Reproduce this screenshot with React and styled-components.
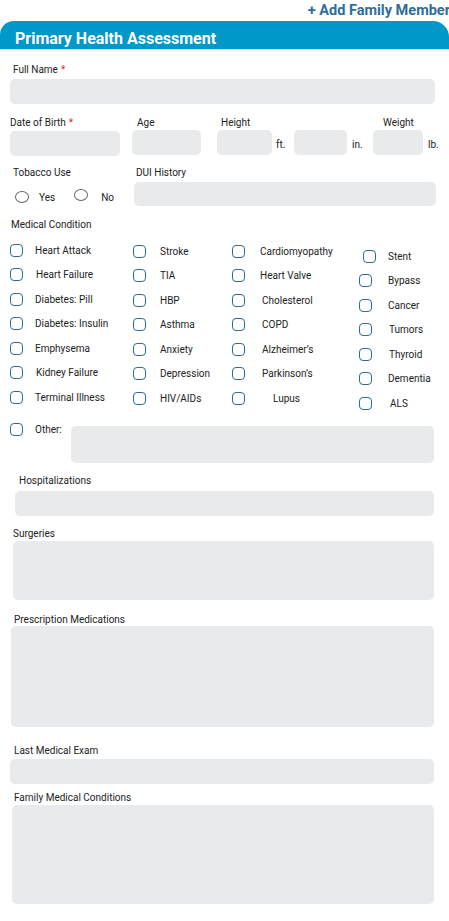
import React from 'react';
import styled, { createGlobalStyle } from 'styled-components';

const GlobalStyle = createGlobalStyle`
  body {
    margin: 0;
    background: #ffffff;
    font-family: Roboto, "Liberation Sans", Arial, sans-serif;
    color: #222222;
  }
`;

const Page = styled.div`
  width: 449px;
  height: 921px;
  overflow: hidden;
  background: #ffffff;
`;

const TopBar = styled.div`
  display: flex;
  justify-content: flex-end;
  height: 21px;
  align-items: center;
`;

const AddLink = styled.a`
  font-size: 14.5px;
  font-weight: 700;
  color: #2f6e98;
  text-decoration: none;
  white-space: nowrap;
  margin-right: -1px;
`;

const TitleBar = styled.div`
  height: 29px;
  background: #0097c9;
  border-radius: 14px 16px 0 0;
  border-bottom: 1px solid #bfe3f1;
  display: flex;
  align-items: center;
  padding: 6px 0 0 15px;
  box-sizing: border-box;
`;

const Title = styled.h1`
  margin: 0;
  font-size: 16px;
  font-weight: 700;
  color: #ffffff;
`;

const Field = styled.div`
  margin: ${(p) => p.$mt}px ${(p) => p.$mr ?? 15}px 0 ${(p) => p.$ml ?? 10}px;
  display: flex;
  flex-direction: column;
  gap: ${(p) => p.$gap ?? 3}px;
`;

const Label = styled.div`
  font-size: 10px;
  line-height: 12px;
  padding-left: ${(p) => p.$indent ?? 0}px;
  color: #222222;
  white-space: nowrap;
`;

const Required = styled.span`
  color: #e8262b;
  margin-left: 3px;
`;

const Box = styled.div`
  height: ${(p) => p.$h}px;
  width: ${(p) => (p.$w ? `${p.$w}px` : 'auto')};
  background: #e9eaec;
  border-radius: 5px;
  flex: ${(p) => (p.$w ? '0 0 auto' : '1 1 auto')};
`;

const Row = styled.div`
  display: flex;
  margin-top: ${(p) => p.$mt}px;
  padding-left: ${(p) => p.$pl ?? 0}px;
`;

const Group = styled.div`
  display: flex;
  flex-direction: column;
  gap: ${(p) => p.$gap ?? 1}px;
  margin-left: ${(p) => p.$ml ?? 0}px;
  margin-right: ${(p) => p.$mr ?? 0}px;
  width: ${(p) => (p.$w ? `${p.$w}px` : 'auto')};
  flex: ${(p) => (p.$grow ? '1 1 auto' : '0 0 auto')};
`;

const Inline = styled.div`
  display: flex;
  align-items: center;
`;

const Unit = styled.span`
  font-size: 10px;
  margin: 3px 0 0 ${(p) => p.$ml ?? 4}px;
  width: ${(p) => p.$w}px;
`;

const RadioRow = styled.div`
  display: flex;
  align-items: center;
  height: 18px;
  margin-top: 9px;
  padding-left: 2px;
`;

const Radio = styled.span`
  width: 12px;
  height: 10px;
  border: 1px solid #666666;
  border-radius: 50%;
  margin-bottom: ${(p) => p.$lift ?? 0}px;
  flex: 0 0 auto;
`;

const RadioText = styled.span`
  font-size: 10px;
  margin-left: ${(p) => p.$ml}px;
  margin-right: ${(p) => p.$mr ?? 0}px;
`;

const ConditionGrid = styled.div`
  display: grid;
  grid-template-columns: 123px 99px 127px 1fr;
  padding-left: 10px;
  margin-top: 7px;
`;

const Column = styled.div`
  display: flex;
  flex-direction: column;
  padding-top: ${(p) => p.$top}px;
`;

const Check = styled.label`
  display: flex;
  align-items: center;
  height: 24.5px;
  padding-left: ${(p) => p.$indent ?? 0}px;
`;

const Box13 = styled.span`
  width: 13px;
  height: 13px;
  box-sizing: border-box;
  border: 1.5px solid #2e6c95;
  border-radius: 4px;
  flex: 0 0 auto;
`;

const CheckText = styled.span`
  font-size: 10px;
  margin-left: ${(p) => p.$gap}px;
  white-space: nowrap;
`;

const OtherRow = styled.div`
  display: flex;
  align-items: flex-start;
  margin: 7px 15px 0 10px;
`;

const OtherLead = styled.div`
  display: flex;
  align-items: center;
  height: 13px;
  width: 61px;
`;

const OtherBox = styled(Box)`
  margin-top: 3px;
`;

const columns = [
  {
    top: 0,
    gap: 12,
    items: [
      ['Heart Attack', 0], ['Heart Failure', 1], ['Diabetes: Pill', 0], ['Diabetes: Insulin', 0],
      ['Emphysema', 0], ['Kidney Failure', 1], ['Terminal Illness', 0],
    ],
  },
  {
    top: 1,
    gap: 14,
    items: [
      ['Stroke', 0], ['TIA', 0], ['HBP', 0], ['Asthma', 0],
      ['Anxiety', 0], ['Depression', 0], ['HIV/AIDs', 0],
    ],
  },
  {
    top: 1,
    gap: 15,
    items: [
      ['Cardiomyopathy', 0], ['Heart Valve', 0], ['Cholesterol', 2], ['COPD', 2],
      ['Alzheimer\u2019s', 2], ['Parkinson\u2019s', 2], ['Lupus', 13],
    ],
  },
  {
    top: 6,
    gap: 16,
    items: [
      ['Stent', -4, 4], ['Bypass', 0], ['Cancer', 0], ['Tumors', 1],
      ['Thyroid', 1], ['Dementia', 0], ['ALS', 2],
    ],
  },
];

const App = () => (
  <Page>
    <GlobalStyle />
    <TopBar>
      <AddLink href="#">+ Add Family Member</AddLink>
    </TopBar>
    <TitleBar>
      <Title>Primary Health Assessment</Title>
    </TitleBar>

    <Field $mt={14} $mr={14} $gap={3}>
      <Label $indent={3}>Full Name<Required>*</Required></Label>
      <Box $h={25} />
    </Field>

    <Row $mt={13} $pl={10}>
      <Group $gap={2}>
        <Label>Date of Birth<Required>*</Required></Label>
        <Box $w={110} $h={25} />
      </Group>
      <Group $ml={12}>
        <Label $indent={5}>Age</Label>
        <Box $w={69} $h={25} />
      </Group>
      <Group $ml={16}>
        <Label $indent={4}>Height</Label>
        <Inline>
          <Box $w={55} $h={25} />
          <Unit $w={18}>ft.</Unit>
          <Box $w={53} $h={25} />
          <Unit $ml={5} $w={21}>in.</Unit>
        </Inline>
      </Group>
      <Group>
        <Label $indent={10}>Weight</Label>
        <Inline>
          <Box $w={50} $h={25} />
          <Unit $ml={5} $w={12}>lb.</Unit>
        </Inline>
      </Group>
    </Row>

    <Row $mt={11} $pl={13}>
      <Group $gap={0} $w={121}>
        <Label>Tobacco Use</Label>
        <RadioRow>
          <Radio />
          <RadioText $ml={10} $mr={19}>Yes</RadioText>
          <Radio $lift={4} />
          <RadioText $ml={13}>No</RadioText>
        </RadioRow>
      </Group>
      <Group $grow $mr={13} $gap={3}>
        <Label $indent={2}>DUI History</Label>
        <Box $h={24} />
      </Group>
    </Row>

    <Field $mt={13} $ml={11}>
      <Label>Medical Condition</Label>
    </Field>

    <ConditionGrid>
      {columns.map((col) => (
        <Column key={col.items[0][0]} $top={col.top}>
          {col.items.map(([name, shift, indent]) => (
            <Check key={name} $indent={indent}>
              <Box13 />
              <CheckText $gap={col.gap + shift}>{name}</CheckText>
            </Check>
          ))}
        </Column>
      ))}
    </ConditionGrid>

    <OtherRow>
      <OtherLead>
        <Box13 />
        <CheckText $gap={12}>Other:</CheckText>
      </OtherLead>
      <OtherBox $h={37} />
    </OtherRow>

    <Field $mt={12} $ml={15} $gap={4}>
      <Label $indent={4}>Hospitalizations</Label>
      <Box $h={25} />
    </Field>

    <Field $mt={12} $ml={13} $gap={1}>
      <Label>Surgeries</Label>
      <Box $h={59} />
    </Field>

    <Field $mt={14} $ml={11} $gap={0}>
      <Label $indent={3}>Prescription Medications</Label>
      <Box $h={101} />
    </Field>

    <Field $mt={18} $ml={10} $gap={2}>
      <Label $indent={4}>Last Medical Exam</Label>
      <Box $h={25} />
    </Field>

    <Field $mt={8} $ml={12} $gap={1}>
      <Label $indent={2}>Family Medical Conditions</Label>
      <Box $h={99} />
    </Field>
  </Page>
);

export default App;
